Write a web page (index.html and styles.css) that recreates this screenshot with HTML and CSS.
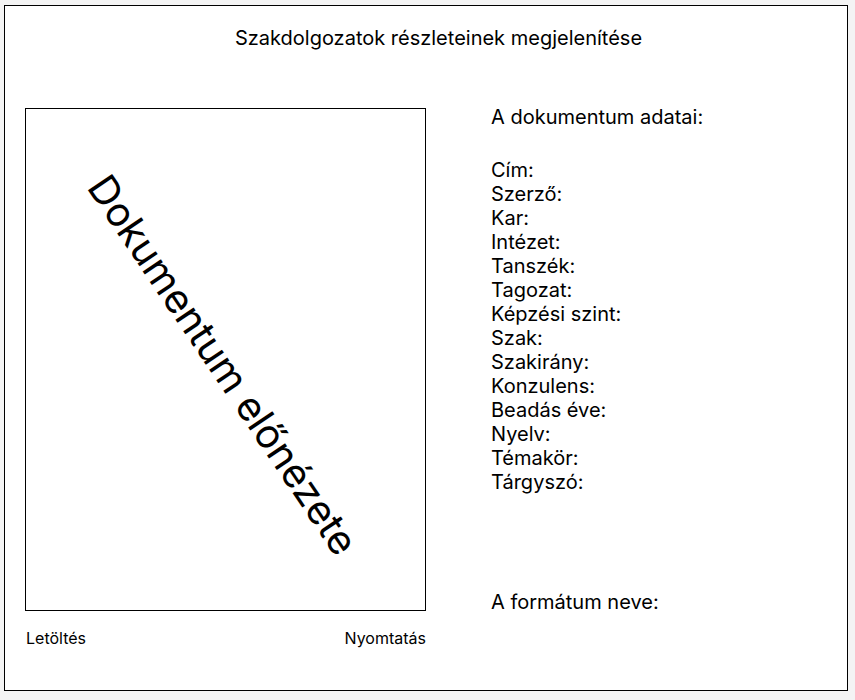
FILE: index.html
```html
<!DOCTYPE html>
<html lang="hu">
<head>
<meta charset="utf-8">
<title>Szakdolgozatok részleteinek megjelenítése</title>
<link rel="stylesheet" href="styles.css">
</head>
<body>
<main class="page">
  <h1 class="title">Szakdolgozatok részleteinek megjelenítése</h1>
  <div class="columns">
    <section class="document">
      <div class="preview"><span class="preview-label">Dokumentum előnézete</span></div>
      <div class="actions">
        <button class="action" type="button">Letöltés</button>
        <button class="action" type="button">Nyomtatás</button>
      </div>
    </section>
    <section class="details">
      <h2 class="heading">A dokumentum adatai:</h2>
      <ul class="fields">
        <li>Cím:</li>
        <li>Szerző:</li>
        <li>Kar:</li>
        <li>Intézet:</li>
        <li>Tanszék:</li>
        <li>Tagozat:</li>
        <li>Képzési szint:</li>
        <li>Szak:</li>
        <li>Szakirány:</li>
        <li>Konzulens:</li>
        <li>Beadás éve:</li>
        <li>Nyelv:</li>
        <li>Témakör:</li>
        <li>Tárgyszó:</li>
      </ul>
      <p class="format">A formátum neve:</p>
    </section>
  </div>
</main>
</body>
</html>
```
FILE: styles.css
```css
* {
  box-sizing: border-box;
}

body {
  display: flex;
  min-height: 100vh;
  margin: 0;
  padding: 5px 7px 9px 4px;
  background: #f4f4f4;
  color: #000;
  font-family: Inter, sans-serif;
  font-size: 20px;
  line-height: 24px;
}

.page {
  flex: 1;
  padding: 20px;
  border: 1px solid #000;
  background: #fff;
}

.title,
.heading {
  margin: 0;
  font-size: 20px;
  font-weight: 400;
}

.title {
  padding-left: 25px;
  text-align: center;
}

.columns {
  display: grid;
  grid-template-columns: minmax(0, 401fr) minmax(0, 336fr);
  gap: 65px;
  margin-top: 55px;
}

.document {
  padding-top: 3px;
}

.preview {
  display: flex;
  align-items: center;
  justify-content: center;
  aspect-ratio: 401 / 503;
  padding: 10px 6px 0 0;
  border: 1px solid #000;
}

.preview-label {
  font-size: 40px;
  line-height: 48px;
  white-space: nowrap;
  transform: rotate(56deg);
}

.actions {
  display: flex;
  justify-content: space-between;
  margin-top: 17px;
  padding-left: 1px;
}

.action {
  padding: 0;
  border: 0;
  background: none;
  color: inherit;
  font: 16px/20px Inter, sans-serif;
  cursor: pointer;
}

.fields {
  margin: 29px 0 96px;
  padding: 0;
  list-style: none;
}

.format {
  margin: 0;
}
```
